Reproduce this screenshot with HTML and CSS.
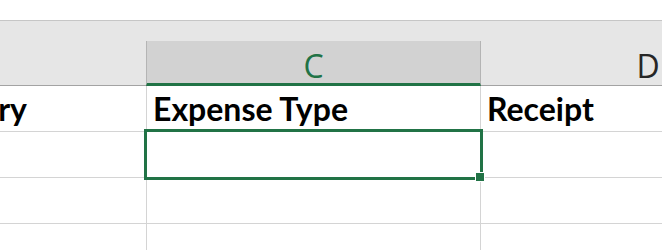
FILE: index.html
```html
<!DOCTYPE html>
<html lang="en">
<head>
    <meta charset="UTF-8">
    <meta name="viewport" content="width=device-width, initial-scale=1.0">
    <title>Expenses</title>
    <link rel="stylesheet" href="styles.css">
</head>
<body>
    <div class="sheet">
        <div class="toolbar"></div>
        <div class="band"></div>

        <div class="col-heads">
            <div class="col-head"></div>
            <div class="col-head selected">C</div>
            <div class="col-head">D</div>
        </div>

        <div class="grid">
            <div class="cell col-b title"><span>Category</span></div>
            <div class="cell col-c title">Expense Type</div>
            <div class="cell col-d title">Receipt</div>

            <div class="cell col-b"></div>
            <div class="cell col-c active">
                <div class="selection"><div class="fill-handle"></div></div>
            </div>
            <div class="cell col-d"></div>

            <div class="cell col-b"></div>
            <div class="cell col-c"></div>
            <div class="cell col-d"></div>

            <div class="cell col-b"></div>
            <div class="cell col-c"></div>
            <div class="cell col-d"></div>
        </div>
    </div>
</body>
</html>
```

FILE: styles.css
```css
body {
    margin: 0;
    padding: 0;
    background-color: white;
    overflow: hidden;
}
.sheet {
    width: 662px;
    height: 250px;
    overflow: hidden;
}
.toolbar {
    height: 20px;
    border-bottom: 1px solid #c6c6c6;
    background-color: white;
}
.band {
    height: 20px;
    background-color: #e6e6e6;
}
.col-heads {
    display: grid;
    grid-template-columns: 146px 335px 334px;
    background-color: #e6e6e6;
}
.col-head {
    box-sizing: border-box;
    height: 45px;
    padding-top: 9px;
    border-bottom: 1px solid #a3a3a3;
    text-align: center;
    font-family: "Open Sans", sans-serif;
    font-size: 32px;
    line-height: 32px;
    color: #262626;
}
.col-head.selected {
    background-color: #d2d2d2;
    border-left: 1px solid #b4b4b4;
    border-right: 1px solid #b4b4b4;
    border-bottom: 3px solid #217346;
    color: #217346;
}
.grid {
    display: grid;
    grid-template-columns: 146px 335px 334px;
    grid-auto-rows: 46px;
}
.cell {
    box-sizing: border-box;
    border-bottom: 1px solid #d4d4d4;
    display: flex;
    align-items: flex-end;
    padding: 0 6px 6px;
    font-family: Lato, "Liberation Sans", sans-serif;
    font-weight: bold;
    font-size: 32px;
    line-height: 33px;
    color: black;
    white-space: nowrap;
    overflow: hidden;
}
.col-b {
    justify-content: flex-end;
    padding-right: 119px;
}
.col-c {
    border-left: 1px solid #d4d4d4;
    border-right: 1px solid #d4d4d4;
}
.cell.active {
    position: relative;
    overflow: visible;
    z-index: 1;
}
.selection {
    position: absolute;
    top: -3px;
    left: -3px;
    right: -3px;
    bottom: -3px;
    border: 3px solid #217346;
}
.fill-handle {
    position: absolute;
    right: -4px;
    bottom: -4px;
    width: 8px;
    height: 8px;
    background-color: #217346;
    box-shadow: 0 0 0 1px white;
}
```
